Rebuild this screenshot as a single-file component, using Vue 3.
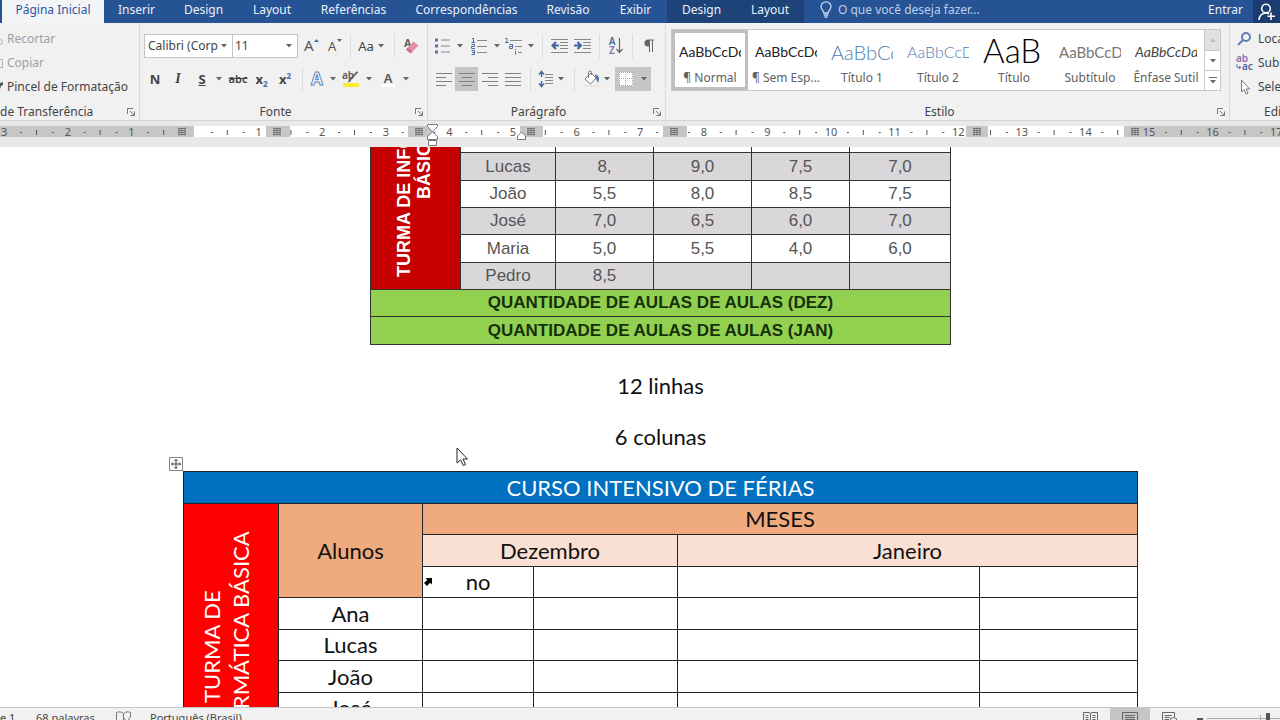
<script setup>
const tabs = ['Página Inicial', 'Inserir', 'Design', 'Layout', 'Referências', 'Correspondências', 'Revisão', 'Exibir']
const contextTabs = ['Design', 'Layout']

const styles = [
  { sample: 'AaBbCcDc', name: '¶ Normal', kind: 'normal' },
  { sample: 'AaBbCcDc', name: '¶ Sem Esp...', kind: 'normal' },
  { sample: 'AaBbCc', name: 'Título 1', kind: 'title1' },
  { sample: 'AaBbCcD', name: 'Título 2', kind: 'title2' },
  { sample: 'AaB', name: 'Título', kind: 'big' },
  { sample: 'AaBbCcD', name: 'Subtítulo', kind: 'subtitle' },
  { sample: 'AaBbCcDd', name: 'Ênfase Sutil', kind: 'emphasis' }
]

const aligns = [
  { label: 'Alinhar à esquerda', d: 'M0 1.5H16M0 5.5H10M0 9.5H16M0 13.5H10' },
  { label: 'Centralizar', d: 'M0 1.5H16M3 5.5H13M0 9.5H16M3 13.5H13' },
  { label: 'Alinhar à direita', d: 'M0 1.5H16M6 5.5H16M0 9.5H16M6 13.5H16' },
  { label: 'Justificar', d: 'M0 1.5H16M0 5.5H16M0 9.5H16M0 13.5H16' }
]

// Ruler geometry: one centimetre in pixels, measured from the text margin.
const origin = 195
const cm = 63.6
const numbers = []
const dots = []
const dashes = []
for (let n = -3; n <= 17; n++) {
  const x = origin + n * cm
  if (n !== 0) numbers.push({ x, label: Math.abs(n) })
  dots.push(x + cm / 4, x + (cm * 3) / 4)
  dashes.push(x + cm / 2)
}
const shaded = [
  [0, 194], [266, 24], [408, 25], [520, 23], [663, 24], [966, 22], [1124, 2000]
]
const columnMarks = [182, 277, 419, 531, 674, 977, 1135]

const grades = [
  ['Lucas', '8,', '9,0', '7,5', '7,0'],
  ['João', '5,5', '8,0', '8,5', '7,5'],
  ['José', '7,0', '6,5', '6,0', '7,0'],
  ['Maria', '5,0', '5,5', '4,0', '6,0'],
  ['Pedro', '8,5', '', '', '']
]
const students = ['Ana', 'Lucas', 'João', 'José']
</script>

<template>
  <div class="word">
    <header class="tabbar">
      <nav class="tabs">
        <button v-for="(t, i) in tabs" :key="t" class="tab" :class="{ active: i === 0 }">{{ t }}</button>
        <button v-for="t in contextTabs" :key="'c' + t" class="tab context">{{ t }}</button>
      </nav>
      <label class="tell">
        <svg width="12" height="18" viewBox="0 0 12 18" fill="none" stroke="#c9daf3" stroke-width="1.3">
          <path d="M3.8 12C3.8 9.500 1 8.500 1 5.600A5 4.800 0 0 1 11 5.600C11 8.500 8.200 9.500 8.200 12ZM3.800 14H8.200M4.500 16H7.500" />
        </svg>
        <input type="text" placeholder="O que você deseja fazer..." aria-label="O que você deseja fazer" />
      </label>
      <button class="signin">Entrar</button>
      <button class="share" aria-label="Compartilhar">
        <svg width="18" height="18" viewBox="0 0 18 18" fill="none" stroke="#fff" stroke-width="1.6">
          <circle cx="8" cy="5.500" r="4.300" />
          <path d="M1 17C1.500 12 4 10 8 10C9.500 10 10.500 10.500 11 11M13 9.500V17M9.500 13.200H17" />
        </svg>
      </button>
    </header>

    <section class="ribbon">
      <div class="group clip">
        <div class="stack">
          <button class="cmd off">
            <svg width="6" height="14" viewBox="0 0 6 14" fill="none" stroke="#b5b5b5"><circle cx="0" cy="10" r="2.500" /></svg>Recortar
          </button>
          <button class="cmd off">
            <svg width="6" height="14" viewBox="0 0 6 14" fill="none" stroke="#b5b5b5"><path d="M0 3.500H2.500V11.500H0" /></svg>Copiar
          </button>
          <button class="cmd">
            <svg width="6" height="14" viewBox="0 0 6 14" fill="#555"><path d="M0 3L3 2V5L1 6L0 9Z" /></svg>Pincel de Formatação
          </button>
        </div>
        <footer class="caption start">
          <span>de Transferência</span>
          <button class="launch" aria-label="Opções"><svg width="8" height="8" viewBox="0 0 8 8" fill="none" stroke="#777"><path d="M.5 6V.5H6M3 3L7 7M7.500 3.500V7.500H3.500" /></svg></button>
        </footer>
      </div>

      <div class="group font">
        <div class="tools f1">
          <span class="pick">
            <select aria-label="Fonte"><option>Calibri (Corp</option></select>
            <svg class="caret" width="6" height="4" viewBox="0 0 6 4"><path d="M0 0H6L3 3.500Z" /></svg>
          </span>
          <span class="pick">
            <select aria-label="Tamanho"><option>11</option></select>
            <svg class="caret" width="6" height="4" viewBox="0 0 6 4"><path d="M0 0H6L3 3.500Z" /></svg>
          </span>
          <button aria-label="Aumentar fonte"><svg width="16" height="16" viewBox="0 0 16 16"><text x="0" y="13" font-size="15">A</text><path d="M10 4L12.500 1L15 4Z" fill="#4a6a9a" /></svg></button>
          <button aria-label="Diminuir fonte"><svg width="16" height="16" viewBox="0 0 16 16"><text x="1" y="13" font-size="13">A</text><path d="M10 1L12.500 4L15 1Z" fill="#4a6a9a" /></svg></button>
          <i class="sep"></i>
          <button class="t13">Aa</button>
          <button aria-label="Mais"><svg class="caret" width="6" height="4" viewBox="0 0 6 4"><path d="M0 0H6L3 3.500Z" /></svg></button>
          <i class="sep"></i>
          <button aria-label="Limpar formatação">
            <svg width="16" height="16" viewBox="0 0 16 16"><text x="1" y="9" font-size="11" font-weight="600">A</text><path d="M3 11.500L10.500 3.500L15.500 7.500L7.500 15.500Z" fill="#e58fa4" /><path d="M3 11.500L5 9.500L9.500 13.500L7.500 15.500Z" fill="#d56e88" /></svg>
          </button>
        </div>
        <div class="tools f2">
          <button class="strong">N</button>
          <button class="ital">I</button>
          <button class="strong under">S</button>
          <button aria-label="Mais"><svg class="caret" width="6" height="4" viewBox="0 0 6 4"><path d="M0 0H6L3 3.500Z" /></svg></button>
          <button class="strike">abc</button>
          <button class="script">x<sub>2</sub></button>
          <button class="script">x<sup>2</sup></button>
          <i class="sep"></i>
          <button aria-label="Efeitos de texto"><svg width="16" height="18" viewBox="0 0 16 18"><text x="8" y="15" text-anchor="middle" font-size="17" font-weight="700" class="outline">A</text></svg></button>
          <button aria-label="Mais"><svg class="caret" width="6" height="4" viewBox="0 0 6 4"><path d="M0 0H6L3 3.500Z" /></svg></button>
          <button aria-label="Realce">
            <svg width="18" height="18" viewBox="0 0 18 18"><text x="0" y="9" font-size="10" font-weight="600">ab</text><path d="M16.500 2L10 9L8 12L6 12.500L7 9L14.500 1.500Z" fill="#666" /><rect x="1" y="13" width="16" height="4" fill="#f6f02c" /></svg>
          </button>
          <button aria-label="Mais"><svg class="caret" width="6" height="4" viewBox="0 0 6 4"><path d="M0 0H6L3 3.500Z" /></svg></button>
          <button aria-label="Cor da fonte"><svg width="16" height="18" viewBox="0 0 16 18"><text x="8" y="13" text-anchor="middle" font-size="13" font-weight="600">A</text><rect x="1" y="14" width="14" height="3" fill="#fff" /></svg></button>
          <button aria-label="Mais"><svg class="caret" width="6" height="4" viewBox="0 0 6 4"><path d="M0 0H6L3 3.500Z" /></svg></button>
        </div>
        <footer class="caption">
          <span>Fonte</span>
          <button class="launch" aria-label="Opções"><svg width="8" height="8" viewBox="0 0 8 8" fill="none" stroke="#777"><path d="M.5 6V.5H6M3 3L7 7M7.500 3.500V7.500H3.500" /></svg></button>
        </footer>
      </div>

      <div class="group para">
        <div class="tools p1">
          <button aria-label="Marcadores"><svg width="16" height="16" viewBox="0 0 16 16"><path d="M0 .5H3V3.500H0ZM0 6.500H3V9.500H0ZM0 12.500H3V15.500H0Z" fill="#5874a3" /><path d="M6 2H15M6 8H15M6 14H15" stroke="#888" /></svg></button>
          <button aria-label="Mais"><svg class="caret" width="6" height="4" viewBox="0 0 6 4"><path d="M0 0H6L3 3.500Z" /></svg></button>
          <button aria-label="Numeração"><svg width="16" height="18" viewBox="0 0 16 18" fill="none" stroke="#4a6a9f"><path d="M1 1.500H2.500V5.500M.5 5.500H4M.5 7.500H3.500V9.500H.5V11.500H4M.5 13.500H3.500V17.500H.5M1 15.500H3.500" /><path d="M6 3.500H16M6 9.500H16M6 15.500H16" stroke="#888" /></svg></button>
          <button aria-label="Mais"><svg class="caret" width="6" height="4" viewBox="0 0 6 4"><path d="M0 0H6L3 3.500Z" /></svg></button>
          <button aria-label="Lista de vários níveis"><svg width="18" height="18" viewBox="0 0 18 18" fill="none" stroke="#4a6a9f"><path d="M.5 1.500H2V5.500M0 5.500H3.500M4.500 7.500H7.500V11.500H4.500V9.500H7.500M10.500 12V13M10.500 14V17.500" /><path d="M5 3.500H17M10 9.500H17M13 15.500H17" stroke="#888" /></svg></button>
          <button aria-label="Mais"><svg class="caret" width="6" height="4" viewBox="0 0 6 4"><path d="M0 0H6L3 3.500Z" /></svg></button>
          <i class="sep"></i>
          <button aria-label="Diminuir recuo"><svg width="18" height="16" viewBox="0 0 18 16"><path d="M0 1.500H17M9 4.500H17M9 7.500H17M9 10.500H17M0 14.500H17" stroke="#888" /><path d="M8 7.500H2M5 4L1.500 7.500L5 11" fill="none" stroke="#3f639c" stroke-width="2" /></svg></button>
          <button aria-label="Aumentar recuo"><svg width="18" height="16" viewBox="0 0 18 16"><path d="M0 1.500H17M9 4.500H17M9 7.500H17M9 10.500H17M0 14.500H17" stroke="#888" /><path d="M0 7.500H6M3.500 4L7 7.500L3.500 11" fill="none" stroke="#3f639c" stroke-width="2" /></svg></button>
          <i class="sep"></i>
          <button class="sort" aria-label="Classificar">
            <span class="az"><span>A</span><span>Z</span></span>
            <svg width="7" height="18" viewBox="0 0 7 18"><path d="M3.500 1V15M.5 12L3.500 15.500L6.500 12" fill="none" stroke="#666" stroke-width="1.200" /></svg>
          </button>
          <i class="sep"></i>
          <button aria-label="Mostrar tudo"><svg width="12" height="14" viewBox="0 0 12 14"><path d="M11 .5H5A3.500 3.500 0 0 0 5 7.500H6V13H7V1.500H9V13H10V1.500H11Z" fill="#666" /></svg></button>
        </div>
        <div class="tools p2">
          <button v-for="(a, i) in aligns" :key="a.label" :class="{ on: i === 1 }" :aria-label="a.label">
            <svg width="16" height="14" viewBox="0 0 16 14"><path :d="a.d" stroke="#808080" /></svg>
          </button>
          <i class="sep"></i>
          <button aria-label="Espaçamento"><svg width="16" height="18" viewBox="0 0 16 18"><path d="M3.500 2V7M3.500 11V16M1 4.500L3.500 1.500L6 4.500M1 13.500L3.500 16.500L6 13.500" fill="none" stroke="#4a6a9f" stroke-width="1.500" /><path d="M7 4.500H15M7 7.500H15M7 10.500H15M7 13.500H15" stroke="#888" /></svg></button>
          <button aria-label="Mais"><svg class="caret" width="6" height="4" viewBox="0 0 6 4"><path d="M0 0H6L3 3.500Z" /></svg></button>
          <i class="sep"></i>
          <button aria-label="Sombreamento"><svg width="18" height="18" viewBox="0 0 18 18"><path d="M2 9L8 3L13 8L7.500 14Z" fill="#fff" stroke="#777" /><path d="M5.500 8V2.500A1.500 1.500 0 0 1 8.500 2.500V5" fill="none" stroke="#777" /><path d="M12 4.500C16 5 17 8 15 13L13 9Z" fill="#5b76a8" /><rect x="1" y="15" width="15" height="2" fill="#f5e4d6" /></svg></button>
          <button aria-label="Mais"><svg class="caret" width="6" height="4" viewBox="0 0 6 4"><path d="M0 0H6L3 3.500Z" /></svg></button>
          <i></i>
          <button class="on" aria-label="Bordas"><svg width="14" height="14" viewBox="0 0 14 14"><rect width="14" height="14" fill="#fff" /><path d="M.5 0V14M13.500 0V14M0 .5H14M0 13.500H14M6.500 0V14M0 6.500H14" stroke="#a5a5a5" stroke-dasharray="1 1" /></svg></button>
          <button class="on" aria-label="Mais bordas"><svg class="caret" width="6" height="4" viewBox="0 0 6 4"><path d="M0 0H6L3 3.500Z" /></svg></button>
        </div>
        <footer class="caption">
          <span>Parágrafo</span>
          <button class="launch" aria-label="Opções"><svg width="8" height="8" viewBox="0 0 8 8" fill="none" stroke="#777"><path d="M.5 6V.5H6M3 3L7 7M7.500 3.500V7.500H3.500" /></svg></button>
        </footer>
      </div>

      <div class="group styles">
        <div class="gallery">
          <button v-for="(s, i) in styles" :key="s.name" class="style" :class="{ chosen: i === 0 }">
            <span class="sample" :class="s.kind">{{ s.sample }}</span>
            <span class="name">{{ s.name }}</span>
          </button>
          <div class="scroller">
            <button class="dim" aria-label="Acima"><svg width="6" height="4" viewBox="0 0 6 4"><path d="M0 4H6L3 .5Z" fill="#bbb" /></svg></button>
            <button aria-label="Abaixo"><svg class="caret" width="6" height="4" viewBox="0 0 6 4"><path d="M0 0H6L3 3.500Z" /></svg></button>
            <button aria-label="Mais estilos"><svg width="8" height="8" viewBox="0 0 8 8"><path d="M0 .5H8" stroke="#666" /><path d="M1 3H7L4 6.500Z" fill="#666" /></svg></button>
          </div>
        </div>
        <footer class="caption">
          <span>Estilo</span>
          <button class="launch" aria-label="Opções"><svg width="8" height="8" viewBox="0 0 8 8" fill="none" stroke="#777"><path d="M.5 6V.5H6M3 3L7 7M7.500 3.500V7.500H3.500" /></svg></button>
        </footer>
      </div>

      <div class="group edit">
        <div class="stack">
          <button class="cmd"><svg width="18" height="16" viewBox="0 0 18 16" fill="none" stroke="#5b7fb5" stroke-width="2"><circle cx="10" cy="6" r="4" /><path d="M7 9L2 14" /></svg>Localizar</button>
          <button class="cmd"><svg width="18" height="16" viewBox="0 0 18 16"><text x="0" y="7" font-size="10" font-weight="600" class="violet">ab</text><text x="6" y="15" font-size="10" font-weight="600" class="blue">ac</text><path d="M1 9V12.500H4M3 11L5 12.500L3 14" fill="none" stroke="#5b7fb5" /></svg>Substituir</button>
          <button class="cmd"><svg width="18" height="16" viewBox="0 0 18 16" fill="#fff" stroke="#777"><path d="M5.500 1V13L8 10.500L10 15L12 14L10 10H13.500Z" /></svg>Selecionar</button>
        </div>
        <footer class="caption start"><span>Edição</span></footer>
      </div>
    </section>

    <svg class="ruler" width="100%" height="26">
      <rect x="0" y="5" width="100%" height="11" fill="#fff" />
      <rect v-for="s in shaded" :key="s[0]" :x="s[0]" y="5" :width="s[1]" height="11" fill="#c6c6c6" />
      <text v-for="n in numbers" :key="n.x" :x="n.x" y="15" text-anchor="middle" font-size="11">{{ n.label }}</text>
      <rect v-for="x in dots" :key="x" :x="x" y="11" width="2" height="1" fill="#555" />
      <rect v-for="x in dashes" :key="x" :x="x" y="9" width="1" height="5" fill="#555" />
      <g v-for="x in columnMarks" :key="x">
        <rect :x="x - 5" y="5" width="11" height="11" fill="#c6c6c6" />
        <path :d="`M${x - 4} 7.500h8m-8 2h8m-8 2h8m-8 2h8m-7 1v-8m3 8v-8m3 8v-8`" stroke="#777" />
      </g>
      <g fill="#fff" stroke="#777">
        <path d="M427.500 3.500H437.500V5.500L432.500 11L427.500 5.500ZM432.500 11L437.500 15.500V18.500H427.500V15.500ZM428.500 19.500H436.500V24.500H428.500Z" />
        <path d="M521.500 11L525.500 15V18.500H517.500V15Z" />
      </g>
    </svg>

    <main class="doc">
      <table class="grades">
        <colgroup><col class="g0" /><col class="g1" /><col class="g2" /><col class="g3" /><col class="g3" /><col /></colgroup>
        <tbody>
          <tr class="sliver">
            <td class="turma" rowspan="6"><div class="vertical">TURMA DE INFORMÁTICA<br />BÁSICA</div></td>
            <td></td><td></td><td></td><td></td><td></td>
          </tr>
          <tr v-for="row in grades" :key="row[0]" class="grade">
            <td v-for="(c, i) in row" :key="i">{{ c }}</td>
          </tr>
          <tr class="total"><td colspan="6">QUANTIDADE DE AULAS DE AULAS (DEZ)</td></tr>
          <tr class="total"><td colspan="6">QUANTIDADE DE AULAS DE AULAS (JAN)</td></tr>
        </tbody>
      </table>

      <p>12 linhas</p>
      <p>6 colunas</p>

      <div class="course-wrap">
        <svg class="handle" width="14" height="14" viewBox="0 0 14 14" fill="none" stroke="#888">
          <rect x=".5" y=".5" width="13" height="13" fill="#fff" />
          <path d="M7 2.500V11.500M2.500 7H11.500M5.500 4L7 2.500L8.500 4M5.500 10L7 11.500L8.500 10M4 5.500L2.500 7L4 8.500M10 5.500L11.500 7L10 8.500" stroke="#444" />
        </svg>
        <table class="course">
          <colgroup><col class="c0" /><col class="c1" /><col class="c2" /><col class="c1" /><col class="c4" /><col /></colgroup>
          <tbody>
            <tr><td class="heading" colspan="6">CURSO INTENSIVO DE FÉRIAS</td></tr>
            <tr>
              <td class="turma" rowspan="7"><div class="vertical">TURMA DE<br />INFORMÁTICA BÁSICA</div></td>
              <td class="peach" rowspan="3">Alunos</td>
              <td class="peach" colspan="4">MESES</td>
            </tr>
            <tr><td class="pale" colspan="2">Dezembro</td><td class="pale" colspan="2">Janeiro</td></tr>
            <tr>
              <td class="first">
                <svg class="pointer" width="10" height="10" viewBox="0 0 10 10"><path d="M2.500 1H9V7.500L7 5.800L4 9L1 6L4.300 3Z" /></svg>no
              </td>
              <td></td><td></td><td></td>
            </tr>
            <tr v-for="s in students" :key="s"><td>{{ s }}</td><td></td><td></td><td></td><td></td></tr>
          </tbody>
        </table>
      </div>

      <svg class="mouse" width="13" height="20" viewBox="0 0 13 20"><path d="M1 1V16L4.500 12.800L7.200 18.500L9.500 17.500L7 12H11.500Z" fill="#fff" stroke="#222" /></svg>
    </main>

    <footer class="status">
      <span class="page-no">e 1</span>
      <span class="words">68 palavras</span>
      <svg width="16" height="14" viewBox="0 0 16 14" fill="none" stroke="#777"><path d="M7.500 11V2.500C5 .5 3 .5.500 1.500V10.500C3 9.500 5 10 7.500 12M7.500 2.500C10 .5 12 .5 14.500 1.500V5M8 7L11 11L15 5" /></svg>
      <span class="lang">Português (Brasil)</span>
      <div class="views">
        <button aria-label="Modo de leitura"><svg width="15" height="12" viewBox="0 0 15 12" fill="none" stroke="#666"><path d="M7.500 12V1.500M.5 12V.5H6L7.500 1.500L9 .5H14.500V12M2.500 3.500H5.500M2.500 5.500H5.500M2.500 7.500H5.500M9.500 3.500H12.500M9.500 5.500H12.500M9.500 7.500H12.500" /></svg></button>
        <button class="on" aria-label="Layout de impressão"><svg width="16" height="12" viewBox="0 0 16 12" fill="none" stroke="#666"><path d="M.5 12V.5H15.500V12M3 3.500H13M3 5.500H13M3 7.500H13" /></svg></button>
        <button aria-label="Layout da Web"><svg width="16" height="12" viewBox="0 0 16 12" fill="none" stroke="#666"><path d="M.5 12V.5H12.500V5M2.500 3.500H10M2.500 5.500H8M2.500 7.500H7" /><circle cx="11.500" cy="9" r="3.500" /></svg></button>
      </div>
      <svg class="zoom" width="83" height="13" viewBox="0 0 83 13"><rect x="0" y="10" width="6" height="2" fill="#555" /><path d="M10 10.500H83M63.500 7V13" stroke="#aaa" /><rect x="69" y="5" width="4" height="8" fill="#555" /></svg>
    </footer>
  </div>
</template>

<style>
body {
  margin: 0;
  overflow: hidden;
}
</style>

<style scoped>
.word {
  display: flex;
  flex-direction: column;
  height: 100vh;
  overflow: hidden;
  background: #fff;
  color: #444;
  font: 12px/16px "Noto Sans", "Open Sans", sans-serif;
}
button, input, select {
  margin: 0;
  padding: 0;
  border: 0;
  background: none;
  color: inherit;
  font: inherit;
}
button {
  display: flex;
  align-items: center;
  justify-content: center;
  white-space: nowrap;
}
svg { flex: none; display: block; overflow: visible; }
svg text { fill: #555; font-family: "Noto Sans", sans-serif; }
svg text.blue { fill: #4a6a9f; }
svg text.violet { fill: #8a6fb0; }
svg text.outline { fill: #fff; stroke: #5f86bd; stroke-width: 1; }
.caret { fill: #666; }

.tabbar {
  display: flex;
  flex: none;
  height: 23px;
  background: #265393;
  color: #eaf1fb;
  overflow: hidden;
}
.tabs {
  display: grid;
  grid-template-columns: 102px 65px 69px 68px 95px 131px 72px 63px 69px 68px;
  padding-left: 2px;
}
.tab { padding-bottom: 3px; }
.tab.active { background: #f3f4f6; color: #2b579a; }
.tab.context { background: #1e4379; }
.tell {
  display: flex;
  flex: 1;
  align-items: center;
  gap: 6px;
  padding: 0 0 3px 16px;
}
.tell input { width: 200px; outline: 0; }
.tell input::placeholder { color: #bdd0ec; opacity: 1; }
.signin { width: 55px; padding-bottom: 3px; }
.share { width: 27px; background: #1a3c70; }

.ribbon {
  display: flex;
  flex: none;
  height: 97px;
  background: #f1f1f1;
  border-bottom: 1px solid #d4d4d4;
}
.group {
  display: flex;
  flex: none;
  flex-direction: column;
  box-sizing: border-box;
  border-right: 1px solid #dadada;
  overflow: hidden;
}
.clip { width: 140px; }
.font { width: 288px; }
.para { width: 238px; }
.styles { flex: 1; }
.edit { width: 50px; border: 0; }
.caption {
  display: grid;
  grid-template-columns: 1fr 16px;
  align-items: center;
  height: 17px;
  margin-top: auto;
  text-align: center;
}
.caption.start { text-align: left; }
.edit .caption { padding-left: 34px; }
.stack { padding-top: 4px; }
.cmd { height: 24px; gap: 1px; }
.edit .cmd { padding-left: 6px; gap: 4px; }
.off { color: #a0a0a0; }
.tools { display: grid; height: 24px; margin: 11px 0 0 4px; }
.tools + .tools { margin-top: 9px; }
.f1 { grid-template-columns: 89px 65px 28px 18px 12px 20px 10px 16px 18px; }
.f2 { grid-template-columns: 22px 24px 24px 10px 28px 19px 28px 6px 24px 8px 28px 8px 30px 6px; }
.p1 { grid-template-columns: 22px 12px 26px 10px 24px 10px 13px 22px 24px 8px 26px 6px 28px; }
.p2 { grid-template-columns: 23px 23px 23px 24px 10px 22px 8px 18px 18px 12px 2px 22px 14px; }
.sep { width: 1px; margin: 0 auto; background: #dcdcdc; }
.on { background: #c5c5c5; }
.t13 { font-size: 13px; }
.strong { font-weight: 700; font-size: 13px; }
.under { text-decoration: underline; }
.ital { font: italic 700 14px "Liberation Serif", serif; }
.strike { font-size: 11px; font-weight: 600; text-decoration: line-through; }
.script { font-size: 13px; font-weight: 700; }
.script sub, .script sup { color: #4a6a9f; font-size: 8px; line-height: 8px; }
.script sub { margin-top: 9px; }
.script sup { margin-bottom: 7px; }
.sort { gap: 1px; }
.az { display: grid; color: #4a6a9f; font-size: 10px; font-weight: 600; line-height: 9px; }
.az span + span { color: #8a6fb0; }
.pick {
  display: flex;
  align-items: center;
  box-sizing: border-box;
  padding: 0 5px 0 3px;
  border: 1px solid #c4c4c4;
  background: #fff;
}
.pick + .pick { border-left: 0; padding-left: 2px; }
.pick select { flex: 1; min-width: 0; appearance: none; outline: 0; }

.gallery {
  display: grid;
  grid-template-columns: repeat(7, 1fr) 16px;
  height: 62px;
  box-sizing: border-box;
  margin: 6px 8px 0 5px;
  border: 1px solid #c8c8c8;
  background: #fff;
}
.style {
  flex-direction: column;
  box-sizing: border-box;
  min-width: 0;
  border: 3px solid transparent;
}
.chosen { border-color: #bfbfbf; }
.sample {
  width: 62px;
  height: 36px;
  overflow: hidden;
  color: #222;
  font: 14px/38px Lato, sans-serif;
  text-align: left;
}
.title1 { color: #4f80b3; font-weight: 300; font-size: 20px; }
.title2 { color: #4f80b3; font-weight: 300; font-size: 16px; }
.big { color: #000; font-weight: 300; font-size: 33px; line-height: 34px; }
.subtitle { color: #777; font-size: 15px; }
.emphasis { color: #444; font-style: italic; }
.name { height: 18px; color: #606060; line-height: 18px; }
.scroller { display: grid; grid-template-rows: 1fr 1fr 1fr; border-left: 1px solid #c8c8c8; }
.scroller button + button { border-top: 1px solid #c8c8c8; }
.dim { background: #e1e1e1; }

.ruler { background: #e9e9e9; overflow: hidden; }

.doc {
  position: relative;
  flex: 1;
  min-height: 0;
  padding: 0 142px 0 183px;
  overflow: hidden;
  color: #111;
  font: 22px/31px Lato, "Noto Sans", sans-serif;
}
table { border-collapse: collapse; table-layout: fixed; }
td { padding: 0; text-align: center; }
.turma { position: relative; color: #fff; }
.vertical {
  position: absolute;
  left: 0;
  box-sizing: border-box;
  width: 100%;
  writing-mode: vertical-rl;
  transform: rotate(180deg);
  white-space: nowrap;
}
.grades {
  width: 581px;
  margin: 0 auto;
  color: #555;
  font: 17px/22px "Liberation Sans", Arial, sans-serif;
}
.grades td { height: 26px; border: 1px solid #333; }
.grades tr:nth-child(3n + 2) td { height: 27px; }
.grades .sliver td { height: 5px; border-top: 0; }
.grades .grade:nth-child(even) td { background: #d9d7da; }
.grades .total td { background: #92d050; color: #16300a; font-weight: 700; }
.grades .turma { background: #c60000; }
.grades .vertical {
  bottom: 0;
  height: 250px;
  padding-right: 23px;
  font-size: 18px;
  line-height: 20px;
  font-weight: 700;
}
.g0 { width: 90px; }
.g1 { width: 95px; }
.g2 { width: 98px; }
.g3 { width: 98px; }
p { margin: 0; line-height: 51px; text-align: center; }
.grades + p { margin-top: 15px; }
.course-wrap { position: relative; margin-top: 9px; }
.handle { position: absolute; left: -14px; top: -14px; }
.course { width: 100%; }
.course td { height: 31px; border: 1px solid #222; line-height: 30px; }
.course tr:nth-child(even) td { height: 30px; }
.c0 { width: 95px; }
.c1 { width: 144px; }
.c2 { width: 111px; }
.c4 { width: 302px; }
.course .heading { background: #0070c0; color: #fff; }
.course .turma { background: #f00; }
.course .vertical { top: 0; height: 286px; padding-right: 13px; line-height: 29px; }
.peach { background: #efaa7e; }
.pale { background: #f9e0d2; }
.first { position: relative; }
.pointer { position: absolute; left: 0; top: 10px; }
.mouse { position: absolute; left: 456px; top: 300px; }

.status {
  display: flex;
  flex: none;
  align-items: flex-start;
  box-sizing: border-box;
  height: 13px;
  border-top: 1px solid #c6c6c6;
  background: #f1f1f1;
  overflow: hidden;
  font-size: 11px;
  line-height: 20px;
}
.status > svg { margin-top: 3px; }
.page-no { width: 36px; }
.words { width: 80px; }
.lang { margin-left: 18px; }
.views { display: flex; margin-left: auto; }
.views button { width: 40px; height: 20px; }
.status .zoom { margin: 0 0 0 7px; }
</style>
